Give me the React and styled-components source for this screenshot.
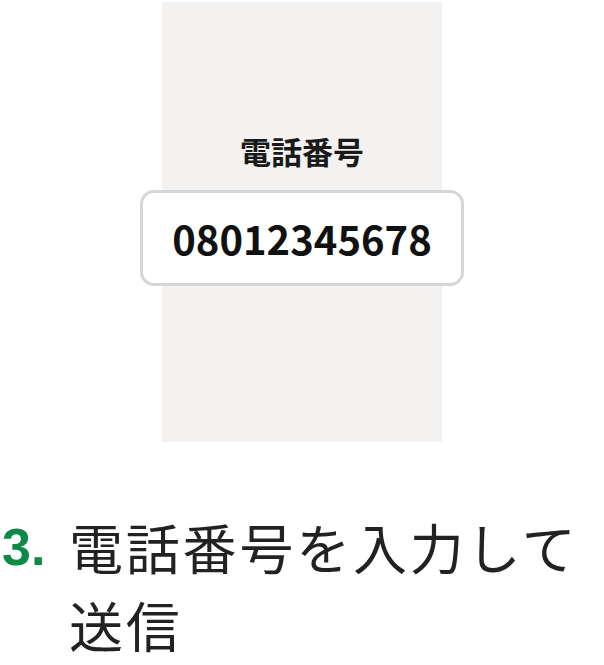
import React from "react";
import styled, { createGlobalStyle } from "styled-components";

const Global = createGlobalStyle`
  html, body { margin: 0; padding: 0; background: #ffffff; }
  body { font-family: "Noto Sans CJK JP", "Noto Sans", sans-serif; }
`;

const Page = styled.div`
  width: 604px;
  padding-top: 2px;
  display: flex;
  flex-direction: column;
  align-items: center;
`;

const Panel = styled.div`
  width: 280px;
  height: 440px;
  box-sizing: border-box;
  padding-top: 131px;
  background: #f3f2f0;
  display: flex;
  flex-direction: column;
  align-items: center;
  justify-content: flex-start;
  gap: 21px;
`;

const Label = styled.div`
  font-family: "Noto Sans CJK JP", sans-serif;
  font-weight: 700;
  font-size: 31px;
  line-height: 36px;
  color: #1a1a1a;
`;

const Field = styled.div`
  width: 318px;
  height: 90px;
  box-sizing: content-box;
  border: 3px solid #d6d6d6;
  border-radius: 14px;
  background: #ffffff;
  display: flex;
  align-items: center;
  justify-content: center;
  font-family: "Noto Sans CJK JP", sans-serif;
  font-weight: 700;
  font-size: 40px;
  color: #111111;
  letter-spacing: 0;
`;

const Step = styled.div`
  align-self: stretch;
  margin-top: 66px;
  display: grid;
  grid-template-columns: 68px 1fr;
  align-items: start;
`;

const StepNumber = styled.div`
  font-family: "Liberation Sans", Arial, sans-serif;
  font-weight: 700;
  font-size: 52px;
  line-height: 78px;
  color: #0d8a47;
  padding-left: 2px;
`;

const StepText = styled.div`
  font-family: "Noto Sans CJK JP", sans-serif;
  font-weight: 400;
  font-size: 54px;
  line-height: 78px;
  letter-spacing: 2.8px;
  color: #222222;
  padding-left: 1px;
`;

export default function App() {
  return (
    <>
      <Global />
      <Page>
        <Panel>
          <Label>電話番号</Label>
          <Field>08012345678</Field>
        </Panel>
        <Step>
          <StepNumber>3.</StepNumber>
          <StepText>
            電話番号を入力して
            <br />
            送信
          </StepText>
        </Step>
      </Page>
    </>
  );
}
